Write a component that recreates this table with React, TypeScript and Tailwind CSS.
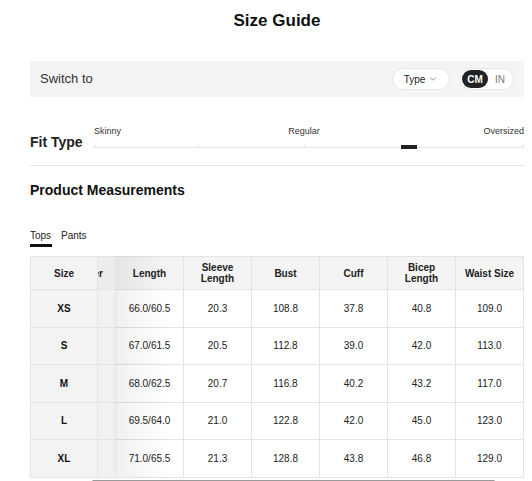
import { ChevronDown } from 'lucide-react';

const headers = ['Length', 'Sleeve\nLength', 'Bust', 'Cuff', 'Bicep\nLength', 'Waist Size'];

const rows = [
  { size: 'XS', values: ['66.0/60.5', '20.3', '108.8', '37.8', '40.8', '109.0'] },
  { size: 'S', values: ['67.0/61.5', '20.5', '112.8', '39.0', '42.0', '113.0'] },
  { size: 'M', values: ['68.0/62.5', '20.7', '116.8', '40.2', '43.2', '117.0'] },
  { size: 'L', values: ['69.5/64.0', '21.0', '122.8', '42.0', '45.0', '123.0'] },
  { size: 'XL', values: ['71.0/65.5', '21.3', '128.8', '43.8', '46.8', '129.0'] },
];

function FitSlider() {
  return (
    <div className="relative w-[430px] h-[26px]">
      <span className="absolute left-0 top-0 text-[9px] text-[#333]">Skinny</span>
      <span className="absolute left-[210px] top-0 -translate-x-1/2 text-[9px] text-[#333]">Regular</span>
      <span className="absolute right-0 top-0 text-[9px] text-[#333]">Oversized</span>
      <div className="absolute left-0 right-0 top-[22px] h-px bg-[#e3e3e3]" />
      <div className="absolute left-0 top-[20px] w-px h-[3px] bg-[#e3e3e3]" />
      <div className="absolute left-[104px] top-[20px] w-px h-[3px] bg-[#e3e3e3]" />
      <div className="absolute left-[210px] top-[20px] w-px h-[3px] bg-[#e3e3e3]" />
      <div className="absolute right-0 top-[20px] w-px h-[3px] bg-[#e3e3e3]" />
      <div className="absolute left-[307px] top-[20px] w-[16px] h-[4px] bg-[#222]" />
    </div>
  );
}

function SizeTable() {
  return (
    <div className="relative">
      <div className="grid grid-cols-[67px_18px_repeat(6,68px)] border-l border-t border-[#e4e4e4] w-[494px]">
        <div className="h-[33px] bg-[#f3f3f3] border-r border-b border-[#e4e4e4] flex items-center justify-center text-[10px] font-bold text-[#222]">
          Size
        </div>
        <div className="h-[33px] bg-[#ececec] border-r border-b border-[#e4e4e4] overflow-hidden flex items-center justify-end pr-[12px] text-[10px] font-bold text-[#222] whitespace-nowrap">
          er
        </div>
        {headers.map((h) => (
          <div
            key={h}
            className="h-[33px] bg-[#f4f4f4] border-r border-b border-[#e4e4e4] flex items-center justify-center text-center text-[10px] leading-[11px] font-bold text-[#222] whitespace-pre-line"
          >
            {h}
          </div>
        ))}
        {rows.map((r) => (
          <div key={r.size} className="contents">
            <div className="h-[37.5px] bg-[#f3f3f3] border-r border-b border-[#e4e4e4] flex items-center justify-center text-[10px] font-bold text-[#111]">
              {r.size}
            </div>
            <div className="h-[37.5px] bg-[#f1f1f1] border-r border-b border-[#e4e4e4]" />
            {r.values.map((v, i) => (
              <div
                key={i}
                className="h-[37.5px] bg-white border-r border-b border-[#e4e4e4] flex items-center justify-center text-[10px] text-[#222]"
              >
                {v}
              </div>
            ))}
          </div>
        ))}
      </div>
      <div className="absolute left-[86px] top-0 h-[221px] w-[50px] bg-gradient-to-r from-black/[0.06] to-transparent pointer-events-none" />
      <div className="flex items-center h-[5px] mt-px">
        <span className="w-[10px]" />
        <div className="w-[3px] h-px bg-[#bbb]" />
        <div className="ml-[49px] w-[403px] h-[3px] rounded-sm bg-[#9a9a9a]" />
        <div className="ml-[12px] w-[3px] h-px bg-[#bbb]" />
      </div>
    </div>
  );
}

export default function App() {
  return (
    <div className="w-[532px] h-[481px] overflow-hidden bg-white pl-[30px] pr-[8px] font-['Liberation_Sans',Arial,sans-serif] text-[#222]">
      <div className="h-[42px] flex items-center justify-center">
        <h1 className="text-[17px] font-bold text-[#111]">Size Guide</h1>
      </div>

      <div className="mt-[19px] h-[36px] bg-[#f4f4f4] flex items-center justify-between pl-[10px] pr-[10px]">
        <span className="text-[13px] text-[#333]">Switch to</span>
        <div className="flex items-center gap-[10px]">
          <button className="h-[22px] w-[58px] rounded-full bg-white border border-[#e6e6e6] flex items-center justify-center gap-[3px] text-[10px] text-[#222]">
            Type
            <ChevronDown className="w-[10px] h-[10px] text-[#555]" strokeWidth={1.5} />
          </button>
          <div className="h-[22px] w-[54px] rounded-full bg-white border border-[#e6e6e6] flex items-center p-px">
            <span className="h-[18px] w-[26px] rounded-full bg-[#222] text-white text-[10px] font-bold flex items-center justify-center">
              CM
            </span>
            <span className="flex-1 text-center text-[10px] text-[#777]">IN</span>
          </div>
        </div>
      </div>

      <div className="mt-[28px] flex items-end">
        <span className="w-[64px] text-[14px] font-semibold text-[#222] leading-[16px] mb-px">Fit Type</span>
        <FitSlider />
      </div>

      <div className="mt-[14px] h-px bg-[#e6e6e6]" />

      <h2 className="mt-[16px] text-[14px] font-bold text-[#111] leading-[17px]">Product Measurements</h2>

      <div className="mt-[31px] flex gap-[9px] text-[10px] text-[#222]">
        <div className="flex flex-col">
          <span className="leading-[12px]">Tops</span>
          <span className="mt-[2px] h-[3px] w-[22px] bg-[#111]" />
        </div>
        <span className="leading-[12px]">Pants</span>
      </div>

      <div className="mt-[9px]">
        <SizeTable />
      </div>
    </div>
  );
}
